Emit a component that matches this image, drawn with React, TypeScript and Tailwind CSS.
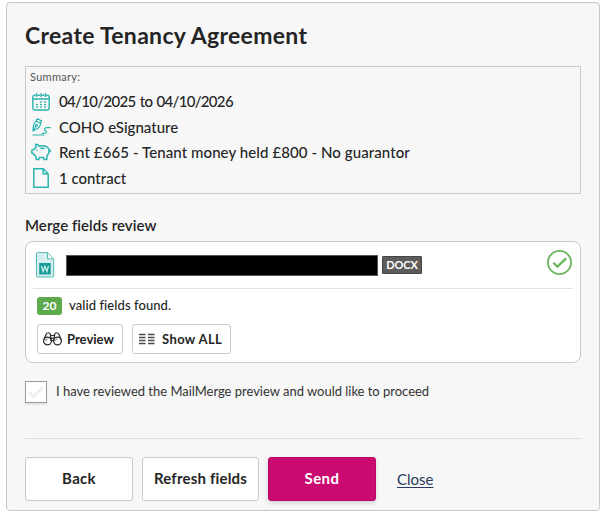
import type { ReactNode } from 'react';

function CalendarIcon() {
  return (
    <svg width="18" height="18" viewBox="0 0 18 18" fill="none" stroke="#2bb5b0" strokeWidth="1.4" strokeLinecap="round">
      <path d="M3 2.2H2.8A2 2 0 0 0 .8 4.2V15a2 2 0 0 0 2 2h12.400a2 2 0 0 0 2-2V4.200a2 2 0 0 0-2-2H15M6 2.200h1.500M10.500 2.200H12M4.500.8v2.800M9 .8v2.800M13.500.8v2.800M.8 6h16.400" />
      <path d="M8.700 9h.6M12.700 9h.6M4.700 11.500h.6M8.700 11.500h.6M12.700 11.500h.6M4.700 14h.6M8.700 14h.6M12.700 14h.6" strokeWidth="1.600" />
    </svg>
  );
}

function SignatureIcon() {
  return (
    <svg width="19" height="18" viewBox="0 0 19 18" fill="none" stroke="#2bb5b0" strokeWidth="1.200" strokeLinecap="round" strokeLinejoin="round">
      <path d="M5.200.8 9.600 2.900 8.700 5.100 4.100 3.200ZM4.100 3.200C2 5.400 1 7.300 1.400 9.200L.9 13l3.700-2C7 10 8.400 7.800 8.700 5.100M1 12.600l2.900-4.600" />
      <circle cx="4.500" cy="7.200" r=".9" />
      <path d="M18.300 9.600h-3.600c-2.100 0-3.100 2.200-1.200 3 1.900.7.9 2.700-1.600 2.700H10.300M.8 17h11" />
    </svg>
  );
}

function PiggyIcon() {
  return (
    <svg width="20" height="18" viewBox="0 0 20 18" fill="none" stroke="#2bb5b0" strokeWidth="1.500" strokeLinecap="round" strokeLinejoin="round">
      <path d="M5 4.300 4.600 1.300C6.200 1.300 7.400 1.900 8.300 3.200c2.600-.7 5.500-.6 7.600.7 1.500.9 2.300 2.400 2.300 4.300 0 2-.8 3.200-2.200 4.500l-.3 3.800h-2.600l-.4-1.900H8.200l-.4 1.900H5.300l-.5-3.500C3.700 12.400 3 11.700 2.500 10.700L.8 10V7.200l1.700-.5C3 5.700 3.900 4.900 5 4.300Z" />
      <path d="M10 5.300c1.200-.3 2.200-.2 3.200.1M5.900 7.200h.1M18.200 8.500c.9 0 1.200-.6 1-1.400" />
    </svg>
  );
}

function PageIcon() {
  return (
    <svg width="16" height="20" viewBox="0 0 16 20" fill="none" stroke="#2bb5b0" strokeWidth="1.500">
      <path d="M.8.8h9.500l4.900 4.900v13.500H.8ZM10.100.8v5h5" />
    </svg>
  );
}

function WordFileIcon() {
  return (
    <svg width="19" height="26" viewBox="0 0 19 26">
      <path d="M1.500.6h10.200l6 6.200V24a1 1 0 0 1-1 1H1.500a1 1 0 0 1-1-1V1.600a1 1 0 0 1 1-1Z" fill="#d4f0ee" stroke="#54b9b5" />
      <path d="M11.500.9v6h6" fill="#fff" stroke="#54b9b5" />
      <rect x="3.200" y="11" width="11.500" height="11.500" fill="#179b98" />
      <path d="m5.500 13.900 1.600 5.700L9 14.300l1.900 5.300 1.600-5.700" fill="none" stroke="#d9f5f2" strokeWidth="1.200" />
    </svg>
  );
}

function BinocularsIcon() {
  return (
    <svg width="19" height="14" viewBox="0 0 19 14" fill="none" stroke="#2b2b2b" strokeWidth="1.200">
      <circle cx="4.500" cy="9" r="3.900" />
      <circle cx="14.500" cy="9" r="3.900" />
      <path d="M.8 7.700 3.200 2C4.200.3 6.600.4 7.300 2.100L8.200 9M18.200 7.700 15.800 2c-1-1.700-3.400-1.600-4.100.1L10.800 9M7.500 3.500h4M8 6.200h3M8.300 8.700h2.400" />
      <path d="M2.500 8.800c.1-1 .9-1.700 1.900-1.800M12.500 8.800c.1-1 .9-1.700 1.900-1.800" strokeWidth=".8" />
    </svg>
  );
}

function ColumnsIcon() {
  return (
    <svg width="16" height="12" viewBox="0 0 16 12" stroke="#4a4a4a" strokeWidth="1.300">
      <path d="M0 1.500h6.500M0 4.500h6.500M0 7.500h6.500M0 10.500h6.500M9 1.500h6.500M9 4.500h6.500M9 7.500h6.500M9 10.500h6.500" />
    </svg>
  );
}

function ValidIcon() {
  return (
    <svg width="26" height="26" viewBox="0 0 26 26" fill="none" stroke="#6bb65c">
      <circle cx="12.500" cy="12.500" r="11.600" strokeWidth="1.800" />
      <path d="m6.400 12.800 4 3.900 8.700-8.300" strokeWidth="2.300" />
    </svg>
  );
}

function SummaryRow({ icon, children }: { icon: ReactNode; children: ReactNode }) {
  return (
    <li className="flex h-[25.4px] items-center">
      <span className="flex w-[28px] shrink-0 justify-center">{icon}</span>
      <span className="ml-[4px] whitespace-nowrap">{children}</span>
    </li>
  );
}

export default function App() {
  return (
    <div className="h-[514px] overflow-hidden bg-white pt-[2px] pl-[6px] font-['Lato','Open_Sans',sans-serif] text-[15px] text-[#252525]">
      <main className="h-[509px] w-[594px] rounded-[4px] border border-[#c8c8c8] bg-[#f7f7f7] px-[18px]">
        <h1 className="pt-[15px] text-[23px] leading-[34px] font-bold tracking-[0.3px] whitespace-nowrap">Create Tenancy Agreement</h1>

        <section className="mt-[14px] h-[128px] w-[556px] border border-[#c9c9c9] pl-px">
          <h2 className="pt-[2px] pl-[3px] text-[11px] leading-[15px] tracking-[0.3px] text-[#555]">Summary:</h2>
          <ul className="mt-[5px] font-medium">
            <SummaryRow icon={<CalendarIcon />}><span className="tracking-[-0.68px] [word-spacing:1.1px]">04/10/2025 to 04/10/2026</span></SummaryRow>
            <SummaryRow icon={<SignatureIcon />}>COHO eSignature</SummaryRow>
            <SummaryRow icon={<PiggyIcon />}><span className="tracking-[0.09px]">Rent £665 - Tenant money held £800 - No guarantor</span></SummaryRow>
            <SummaryRow icon={<PageIcon />}>1 contract</SummaryRow>
          </ul>
        </section>

        <h2 className="mt-[21px] leading-[20px] font-semibold tracking-[0.05px]">Merge fields review</h2>
        <section className="mt-[6px] h-[122px] w-[556px] rounded-[8px] border border-[#c9c9c9] bg-white px-[7px]">
          <div className="flex h-[47px] items-start border-b border-[#e1e1e1] pl-[3px]">
            <div className="mt-[10px]"><WordFileIcon /></div>
            <div className="mt-[13px] ml-[11px] h-[21px] w-[312px] border border-[#555] bg-black" />
            <span className="mt-[14px] ml-[4px] flex h-[18px] w-[40px] items-center justify-center rounded-[1px] border border-[#444] bg-[#5c5c5c] text-[11px] font-bold tracking-[-0.1px] text-white">DOCX</span>
            <div className="mt-[8px] ml-auto"><ValidIcon /></div>
          </div>
          <div className="mt-[8px] flex items-center pl-[4px]">
            <span className="flex h-[18px] w-[25px] items-center justify-center rounded-[3px] bg-[#5daa4e] text-[12px] font-bold text-white">20</span>
            <span className="ml-[7px] pb-[2px] text-[13px] leading-[16px] font-medium tracking-[0.08px]">valid fields found.</span>
          </div>
          <div className="mt-[9px] flex gap-[9px] pl-[4px] text-[13px] font-bold">
            <button className="flex h-[30px] w-[86px] items-center rounded-[3px] border border-[#cacaca] bg-white pl-[5px]">
              <BinocularsIcon /><span className="ml-[5px] pt-[2px]">Preview</span>
            </button>
            <button className="flex h-[30px] w-[99px] items-center rounded-[3px] border border-[#cacaca] bg-white pl-[6px]">
              <ColumnsIcon /><span className="ml-[7px] pt-[2px] tracking-[0.38px] whitespace-nowrap">Show ALL</span>
            </button>
          </div>
        </section>

        <label className="mt-[18px] flex h-[22px] w-[556px] items-center text-[13px] text-[#333]">
          <span className="flex h-[22px] w-[22px] items-center justify-center border border-[#999] bg-white shadow-[0_2px_1px_#e4e4e4]">
            <svg width="16" height="12" viewBox="0 0 16 12" fill="none" stroke="#eeeeee" strokeWidth="2.800"><path d="m1 6 4.500 4.500L15 1" /></svg>
          </span>
          <span className="ml-[9px] tracking-[-0.02px] whitespace-nowrap">I have reviewed the MailMerge preview and would like to proceed</span>
        </label>

        <footer className="mt-[35px] flex w-[556px] items-center border-t border-[#dcdcdc] pt-[18px] font-bold">
          <button className="h-[44px] w-[108px] rounded-[3px] border border-[#cacaca] bg-white pb-px tracking-[0.3px]">Back</button>
          <button className="ml-[9px] h-[44px] w-[117px] rounded-[3px] border border-[#cacaca] bg-white pb-px tracking-[0.18px]">Refresh fields</button>
          <button className="ml-[9px] h-[44px] w-[108px] rounded-[3px] border border-[#b80863] bg-[#ca0a70] pb-px tracking-[0.4px] text-white shadow-[0_2px_5px_#00000026]">Send</button>
          <a className="ml-[21px] font-normal text-[#293a5c] underline underline-offset-2" href="#close">Close</a>
        </footer>
      </main>
    </div>
  );
}
